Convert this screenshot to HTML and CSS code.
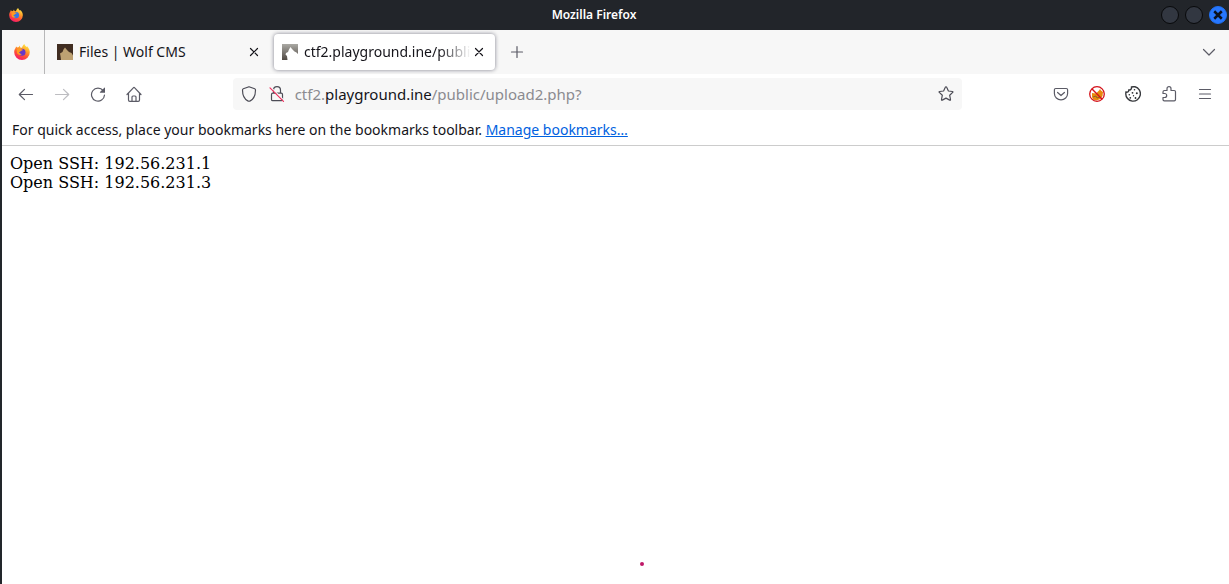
FILE: index.html
```html
<!DOCTYPE html>
<html lang="en">
<head>
<meta charset="utf-8">
<title>Mozilla Firefox</title>
<link rel="stylesheet" href="styles.css">
</head>
<body>
<svg class="defs" width="0" height="0" aria-hidden="true">
  <defs>
    <linearGradient id="flame" x1="0.8" y1="0" x2="0.3" y2="1">
      <stop offset="0" stop-color="#fff44f"/>
      <stop offset="0.35" stop-color="#ffa52a"/>
      <stop offset="0.65" stop-color="#ff5634"/>
      <stop offset="1" stop-color="#f5156c"/>
    </linearGradient>
    <linearGradient id="fade" x1="0" y1="0" x2="0" y2="1">
      <stop offset="0" stop-color="#aaa9a4"/>
      <stop offset="1" stop-color="#504943"/>
    </linearGradient>
    <symbol id="fox" viewBox="0 0 16 16">
      <path fill="url(#flame)" d="M10.4 0c.5 1.4 1.1 2 2.200 3.100l.5-.8c1.800 2 2.700 3.800 2.700 6A7.800 7.700 0 0 1 .2 8.300c0-2 .6-3.400 1.500-4.500L2 2.400l1.400 1.200 1.500-.6.800-1.400.6 1.800 1.700.4C8.300 2.300 9.100.8 10.400 0z"/>
      <circle cx="8" cy="8.200" r="3.500" fill="currentColor"/>
      <path fill="#ff9a22" d="M2.800 5.200c1.400-1 2.800-.9 4-.2l2 .4c0 .9-.8 1.100-1.900 1.400-.4.900-.9 1.300-1.800 1.300.2 1.300 1.300 2.100 2.700 1.800C6.400 11.800 3.800 11 3 8.800z"/>
    </symbol>
    <symbol id="close" viewBox="0 0 16 16">
      <path d="M4.500 4.500l7 7M11.500 4.500l-7 7" fill="none" stroke="currentColor" stroke-width="1.200" stroke-linecap="round"/>
    </symbol>
  </defs>
</svg>
<div class="window">
  <header class="titlebar">
    <svg class="app-icon" width="14" height="14"><use href="#fox"/></svg>
    <h1 class="title">Mozilla Firefox</h1>
    <div class="window-controls">
      <button class="control" aria-label="Minimize"></button>
      <button class="control" aria-label="Maximize"></button>
      <button class="control control-close" aria-label="Close window">
        <svg width="10" height="10" viewBox="0 0 8 8"><path d="M1 1l6 6M7 1L1 7" stroke="#0b1220" stroke-width="2"/></svg>
      </button>
    </div>
  </header>

  <nav class="tabs" aria-label="Tabs">
    <button class="view-button" aria-label="Firefox View"><svg width="16" height="16"><use href="#fox"/></svg></button>
    <div class="tab">
      <svg width="16" height="16" viewBox="0 0 16 16"><path fill="#402d21" d="M0 0h16v16H0z"/><path fill="#bda172" d="M4 16l-.5-4L3 9.500 5.500 8l1-2.500L8 3.500 10 6l2 2 2.500 1L16 11.500V16z"/></svg>
      <button class="tab-label">Files | Wolf CMS</button>
      <button class="tab-close" aria-label="Close tab"><svg width="16" height="16"><use href="#close"/></svg></button>
    </div>
    <div class="tab tab-active">
      <svg width="16" height="16" viewBox="0 0 16 16"><path fill="url(#fade)" d="M0 0h16v16H0z"/><path fill="#fff" d="M5.500 16L5 12l-1.500-1.500L4 9l2-1 1-2.500L8.500 3 10 5l2.500 2.500 2 1L16 10v6z"/></svg>
      <button class="tab-label">ctf2.playground.ine/public</button>
      <button class="tab-close" aria-label="Close tab"><svg width="16" height="16"><use href="#close"/></svg></button>
    </div>
    <button class="icon-button" aria-label="New tab"><svg class="line" width="16" height="16" viewBox="0 0 16 16"><path d="M8 2.500v11M2.500 8h11"/></svg></button>
    <button class="icon-button all-tabs" aria-label="List all tabs"><svg class="line" width="16" height="16" viewBox="0 0 16 16"><path d="M2.500 5.500L8 11l5.500-5.500"/></svg></button>
  </nav>

  <div class="toolbar">
    <button class="icon-button" aria-label="Back"><svg class="line" width="16" height="16" viewBox="0 0 16 16"><path d="M14.500 8.500h-13M6.500 3.300L1.300 8.500l5.200 5.200"/></svg></button>
    <button class="icon-button" aria-label="Forward" disabled><svg class="line" width="16" height="16" viewBox="0 0 16 16"><path d="M1.500 8.500h13M9.500 3.300l5.200 5.200-5.200 5.200"/></svg></button>
    <button class="icon-button" aria-label="Reload"><svg class="line" width="16" height="16" viewBox="0 0 16 16"><path d="M13.200 4.700A6.500 6.500 0 1 0 14.500 9"/><path fill="currentColor" stroke="none" d="M14.300 1.800q.7-.5.700.3v4.600H10.300q-.8 0-.3-.6z"/></svg></button>
    <button class="icon-button" aria-label="Home"><svg class="line" width="16" height="16" viewBox="0 0 16 16"><path d="M1 8.500l6.300-6.700q.7-.7 1.400 0L15 8.500M2.500 7v7q0 1.300 1.300 1.300h8.400q1.300 0 1.300-1.300V7M6 15v-4q0-1 1-1h2q1 0 1 1v4"/></svg></button>
    <div class="spacer"></div>
    <div class="urlbar">
      <button class="url-icon" aria-label="Tracking protection"><svg class="line" width="16" height="16" viewBox="0 0 16 16"><path d="M8 .7l5.700 2.100q.8.300.8 1.200c0 5-1.400 8.800-5.300 10.900q-1.200.6-2.400 0C2.900 12.800 1.500 9 1.500 4q0-.9.8-1.200z"/></svg></button>
      <button class="url-icon" aria-label="Connection not secure"><svg class="line" width="16" height="16" viewBox="0 0 16 16"><path d="M4.500 7V4.200a3.500 3.500 0 0 1 7 0V7M3.800 7.100h8.400q1.300 0 1.300 1.300v5q0 1.300-1.300 1.300H3.800q-1.300 0-1.300-1.300v-5q0-1.300 1.300-1.300z"/><path class="slash-gap" d="M2 1.300l13.500 13.500"/><path class="slash" d="M1 1.800l13.500 13.500"/></svg></button>
      <a class="url" href="#">ctf2.<span class="domain">playground.ine</span>/public/upload2.php?</a>
      <button class="url-icon" aria-label="Bookmark this page"><svg class="line" width="16" height="16" viewBox="0 0 16 16"><path d="M8 .8q.5 0 .7.500l1.700 3.700 4 .5q1 .2.300.9l-3 2.900.8 4.200q.1 1-.8.600L8 12.100l-3.700 2q-.9.400-.8-.6l.8-4.200-3-2.900q-.7-.7.300-.9l4-.5 1.700-3.700Q7.500.8 8 .8z"/></svg></button>
    </div>
    <div class="spacer"></div>
    <button class="icon-button" aria-label="Save to Pocket"><svg class="line" width="16" height="16" viewBox="0 0 16 16"><path d="M2.700 2.500h10.600q1.300 0 1.300 1.300v3.700a6.600 6.300 0 0 1-13.200 0V3.800q0-1.300 1.300-1.300zM4.600 6.500L8 9.500l3.400-3"/></svg></button>
    <button class="icon-button" aria-label="FoxyProxy"><svg width="16" height="16" viewBox="0 0 16 16"><path fill="#e98a0c" d="M3 7l4 .5 3-3 1-1.500 1 1.500L14 6l-.5 4-2 3-4 1.500-3.500-1L3 11z"/><path fill="none" stroke="#79552c" stroke-width="0.800" d="M4 11l3-1 1 2 3-1"/><circle cx="8" cy="8" r="7.300" fill="none" stroke="#d4121b" stroke-width="1.300"/><path stroke="#d4121b" stroke-width="1.400" d="M2.800 2.800l10.400 10.400"/></svg></button>
    <button class="icon-button" aria-label="Cookie editor"><svg width="16" height="16" viewBox="0 0 16 16"><path fill="none" stroke="#383a3e" stroke-width="1.400" d="M6.500 1q1.500-.5 3.500-.2A7.300 7.300 0 1 1 .8 7.500q0-1 .2-1.500 1 .5 2-.2.800-.5.800-1.800 1.700.3 2.300-.8.500-.9.400-2.200z"/><g fill="#292b2f"><circle cx="9.500" cy="3.800" r="0.800"/><circle cx="7.500" cy="6.800" r="0.900"/><circle cx="11.800" cy="7.200" r="1"/><circle cx="4.300" cy="8.800" r="0.800"/><circle cx="8.500" cy="9.800" r="0.700"/><circle cx="5.300" cy="11.800" r="0.900"/><circle cx="10.500" cy="12" r="0.900"/></g></svg></button>
    <button class="icon-button" aria-label="Extensions"><svg class="line" width="16" height="16" viewBox="0 0 16 16"><path d="M2 6q0-1.500 1.500-1.500H6V2.700a2 2 0 0 1 4 0v1.800h3.200q1.300 0 1.300 1.300v7.700q0 1.300-1.300 1.300H3.300q-1.300 0-1.300-1.300v-2h1.700a2 2 0 0 0 0-4H2z"/></svg></button>
    <button class="icon-button" aria-label="Open application menu"><svg class="line" width="16" height="16" viewBox="0 0 16 16"><path d="M2.500 3.500h11M2.500 8h11M2.500 12.500h11"/></svg></button>
  </div>

  <p class="bookmarks">For quick access, place your bookmarks here on the bookmarks toolbar. <a href="#">Manage bookmarks…</a></p>

  <main class="page">
    Open SSH: 192.56.231.1<br>
    Open SSH: 192.56.231.3
    <span class="marker"></span>
  </main>
</div>
</body>
</html>
```
FILE: styles.css
```css
* {
  box-sizing: border-box;
}

body {
  margin: 0;
  font: 14px/20px "Noto Sans", sans-serif;
  color: #15141a;
  background: #fff;
}

button {
  margin: 0;
  padding: 0;
  border: 0;
  background: none;
  color: inherit;
  font: inherit;
}

svg {
  display: block;
  flex: none;
}

.defs {
  position: absolute;
}

.window {
  display: flex;
  flex-direction: column;
  min-height: 100vh;
  border-left: 2px solid #22262b;
}

.titlebar {
  display: grid;
  grid-template-columns: 1fr auto 1fr;
  align-items: center;
  height: 30px;
  margin-left: -2px;
  padding: 0 2px 0 9px;
  background: #22252a;
  color: #fff;
}

.app-icon {
  color: #3477e8;
}

.title {
  margin: 0;
  padding-right: 48px;
  font-size: 12px;
  line-height: 16px;
  font-weight: 600;
}

.window-controls {
  display: flex;
  gap: 6px;
  justify-content: flex-end;
}

.control {
  display: grid;
  place-items: center;
  width: 18px;
  height: 18px;
  border: 1px solid #08090b;
  border-radius: 50%;
  background: #323741;
}

.control-close {
  border-color: #2070f2;
  background: #2777ff;
}

.tabs {
  display: flex;
  align-items: center;
  height: 44px;
  padding-right: 2px;
  background: #f7f7f7;
}

.view-button {
  display: grid;
  place-items: center;
  align-self: stretch;
  width: 43px;
  padding-right: 2px;
  border-right: 1px solid #b7b7b8;
  color: #6738c8;
}

.tab {
  display: flex;
  align-items: center;
  width: 221px;
  height: 36px;
  margin-left: 4px;
  padding: 0 8px;
  border-radius: 4px;
}

.tab-active {
  background: #fff;
  box-shadow: 0 0 4px #80808e;
}

.tab-label {
  flex: 1;
  min-width: 0;
  margin-left: 6px;
  overflow: hidden;
  text-align: left;
  white-space: nowrap;
}

.tab-active .tab-label {
  mask-image: linear-gradient(to left, transparent, #000 32px);
}

.icon-button {
  display: grid;
  place-items: center;
  flex: none;
  width: 36px;
  height: 32px;
  color: #5b5b66;
}

.tab + .icon-button {
  margin-left: 4px;
}

.tabs .all-tabs {
  margin-left: auto;
}

.icon-button:disabled {
  opacity: 0.4;
}

.line {
  fill: none;
  stroke: currentColor;
  stroke-width: 1.2;
  stroke-linecap: round;
  stroke-linejoin: round;
}

.toolbar {
  display: flex;
  align-items: center;
  height: 40px;
  padding: 0 6px;
}

.spacer {
  flex: 1;
}

.urlbar {
  display: flex;
  flex: 9;
  align-items: center;
  height: 32px;
  padding: 0 2px;
  border-radius: 4px;
  background: #f7f7f7;
}

.url-icon {
  display: grid;
  place-items: center;
  width: 28px;
  height: 28px;
  color: #4c4c56;
}

.slash-gap {
  stroke: #f7f7f7;
}

.slash {
  stroke: #f0305f;
}

.url {
  flex: 1;
  margin-left: 4px;
  color: #8b8b90;
  font-size: 15px;
  text-decoration: none;
}

.domain {
  color: #15141a;
}

.bookmarks {
  margin: 0;
  padding: 6px 10px 5px;
  border-bottom: 1px solid #cccccc;
}

.bookmarks a {
  color: #0061e0;
}

.page {
  position: relative;
  flex: 1;
  padding: 8px;
  color: #000;
  font: 16px/19px "DejaVu Serif", serif;
}

.marker {
  position: absolute;
  bottom: 18px;
  left: 52%;
  width: 4px;
  height: 4px;
  border-radius: 50%;
  background: #c01868;
}
```
